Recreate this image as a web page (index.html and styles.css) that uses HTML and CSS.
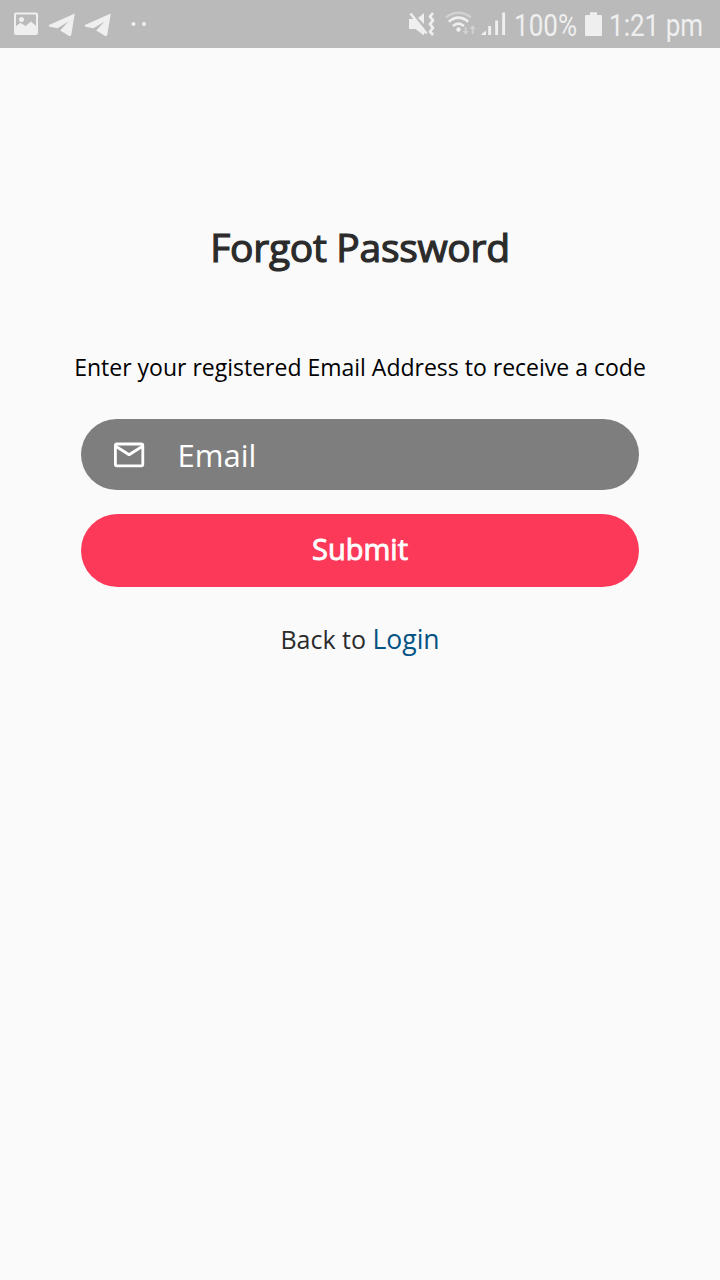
FILE: index.html
```html
<!DOCTYPE html>
<html lang="en">
<head>
<meta charset="utf-8">
<title>Forgot Password</title>
<link rel="stylesheet" href="styles.css">
</head>
<body>
<header class="status-bar">
  <svg class="status-left" width="160" height="48" viewBox="0 0 160 48" fill="#efefef">
    <path fill-rule="evenodd" d="M16 12.500h20a2 2 0 0 1 2 2V33a2 2 0 0 1-2 2H16a2 2 0 0 1-2-2V14.500a2 2 0 0 1 2-2zM16 14.600v11.600l4.500-3.400 5 3.200 5.500-4.500 5 4.500V14.600z"/>
    <circle cx="21.500" cy="19.500" r="2.500"/>
    <path id="plane" d="M49 25 74.800 13.600 71.300 34.500Q70.900 36.800 68.800 35.700L60.200 30.600 68.500 21.500 57.500 28.300 49.700 26.700Q48 26 49 25z"/>
    <use href="#plane" x="36"/>
    <circle cx="133.500" cy="24" r="2"/><circle cx="144" cy="24" r="2"/>
  </svg>
  <div class="status-right">
    <svg width="110" height="48" viewBox="400 0 110 48" fill="#efefef">
      <path d="M409 19h5.500l9.500 9.500V35.500l-8.500-6.500H409zM418 18l6-5v11z"/>
      <path d="M410.500 13.500 426.500 33.500" fill="none" stroke="#efefef" stroke-width="2.500"/>
      <path d="M433 13l-3 3.700 3 3.700-3 3.700 3 3.700-3 3.700 3 3.500" fill="none" stroke="#efefef" stroke-width="2.700" stroke-linejoin="round"/>
      <g fill="none" stroke="#efefef" stroke-width="2.500">
        <path opacity=".45" d="M446 17.300Q458.500 8.200 471 17.300"/>
        <path d="M448.800 21.700Q458.500 13.500 468.200 21.700M453 26Q458.500 21.300 464 26"/>
      </g>
      <circle cx="458.500" cy="29.500" r="2.200"/>
      <path opacity=".45" d="M464.800 27h1.800v4h2.200l-3.100 3.800-3.100-3.800h2.200zM471.800 34h1.800v-5h2.200l-3.100-3.800-3.100 3.800h2.200z"/>
      <path d="M481.500 35v-1l4.500-3.500V35zM488.200 26h2.900v9h-2.900zM495.200 20.500h2.900V35h-2.900zM502.200 12.500h2.900V35h-2.900z"/>
    </svg>
    <span class="battery-level"><span class="condensed">100%</span></span>
    <svg class="battery" width="17" height="24" viewBox="0 0 17 24" fill="#efefef"><path d="M1 3h4V.300h7V3h4a1 1 0 0 1 1 1v19a1 1 0 0 1-1 1H1a1 1 0 0 1-1-1V4a1 1 0 0 1 1-1z"/></svg>
    <span class="clock"><span class="condensed">1:21 pm</span></span>
  </div>
</header>
<main class="screen">
  <h1 class="title">Forgot Password</h1>
  <p class="hint">Enter your registered Email Address to receive a code</p>
  <form class="form">
    <div class="field">
      <svg class="mail" width="32" height="26" viewBox="0 0 32 26" fill="none" stroke="#fff" stroke-width="2.800" stroke-linejoin="round"><rect x="2.400" y="2" width="27.400" height="21.800" rx="1.500"/><path d="M2.700 4.300 16.100 12.700 29.500 4.300"/></svg>
      <span class="placeholder">Email</span>
    </div>
    <button class="submit" type="button">Submit</button>
  </form>
  <p class="back">Back to <a class="login" href="#">Login</a></p>
</main>
</body>
</html>
```

FILE: styles.css
```css
* { box-sizing: border-box; }
body {
  margin: 0;
  min-height: 1280px;
  background: #fafafa;
  font-family: "Open Sans", sans-serif;
  white-space: nowrap;
}
.status-bar {
  display: flex;
  justify-content: space-between;
  height: 48px;
  background: #bababa;
  color: #efefef;
  font: 31px/51px Roboto, sans-serif;
}
.status-right { display: flex; width: 320px; }
.battery-level { width: 75px; padding-left: 4px; }
.battery { margin-top: 12px; }
.clock { width: 110px; padding-left: 7px; }
.condensed {
  display: inline-block;
  transform: scaleX(.84);
  transform-origin: left;
}
.screen {
  display: flex;
  flex-direction: column;
  align-items: center;
}
.title {
  margin: 171px 0 0;
  font-size: 39px;
  font-weight: 400;
  line-height: 56px;
  letter-spacing: -.3px;
  color: #2b2b2b;
  -webkit-text-stroke: 1.2px #2b2b2b;
}
.hint {
  margin: 76px 0 0;
  font-size: 23px;
  line-height: 32px;
  color: #000;
}
.form {
  display: flex;
  flex-direction: column;
  gap: 24px;
  width: 558px;
  margin-top: 36px;
}
.field {
  display: flex;
  align-items: center;
  height: 71px;
  padding-left: 32px;
  border-radius: 36px;
  background: #7e7e7e;
}
.placeholder {
  margin-left: 32.5px;
  color: #fff;
  font-size: 31px;
}
.submit {
  height: 72.5px;
  padding: 0 0 4px;
  border: 0;
  border-radius: 37px;
  background: #fd3959;
  color: #fff;
  font: 29px "Open Sans", sans-serif;
  -webkit-text-stroke: .9px #fff;
}
.back {
  margin: 34.5px 0 0;
  font-size: 25px;
  line-height: 36px;
  color: #2b2b2b;
}
.login {
  color: #045384;
  font-size: 26.5px;
  text-decoration: none;
}
```
